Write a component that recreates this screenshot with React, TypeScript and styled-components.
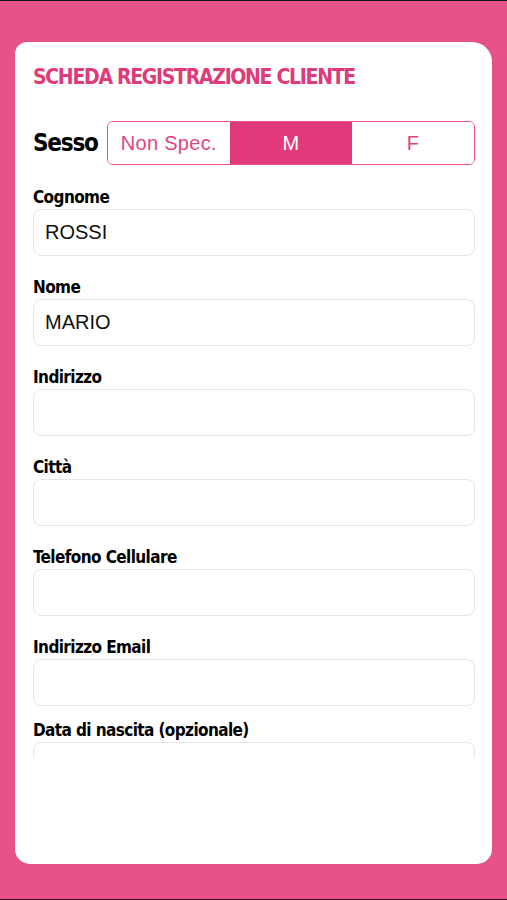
import React from "react";
import styled, { createGlobalStyle } from "styled-components";

const Global = createGlobalStyle`
  html, body { margin: 0; padding: 0; }
  body {
    background: #e8528a;
    font-family: "Liberation Sans", Arial, sans-serif;
  }
  * { box-sizing: border-box; }
`;

const condensed = `"DejaVu Sans Condensed", "Liberation Sans", sans-serif`;

const Page = styled.div`
  height: 900px;
  border-top: 1px solid #111;
  border-bottom: 1px solid #3a0d22;
  padding: 41px 15px 0 15px;
  background: #e8528a;
`;

const Card = styled.div`
  height: 822px;
  background: #fff;
  border-radius: 12px 20px 15px 15px;
  padding: 0 17px 0 18px;
  display: flex;
  flex-direction: column;
`;

const Title = styled.h1`
  margin: 22px 0 0 0;
  font-family: ${condensed};
  font-weight: 700;
  font-size: 21px;
  line-height: 26px;
  letter-spacing: -1.3px;
  color: #e03a78;
`;

const SexRow = styled.div`
  margin-top: 31px;
  display: flex;
  align-items: center;
  gap: 9px;
`;

const SexLabel = styled.span`
  font-family: ${condensed};
  font-weight: 700;
  font-size: 24px;
  letter-spacing: -1.2px;
  color: #000;
`;

const Segmented = styled.div`
  flex: 1;
  height: 44px;
  display: flex;
  border: 1.5px solid #e8528a;
  border-radius: 6px;
  overflow: hidden;
`;

const Segment = styled.div<{ $active?: boolean }>`
  flex: 1;
  display: flex;
  align-items: center;
  justify-content: center;
  font-family: "Liberation Sans", Arial, sans-serif;
  font-size: 20px;
  letter-spacing: 0.3px;
  color: ${(p) => (p.$active ? "#fff" : "#e0457f")};
  background: ${(p) => (p.$active ? "#e2397a" : "#fff")};
`;

const Scroll = styled.div`
  margin-top: 21px;
  height: 572px;
  overflow: hidden;
  display: flex;
  flex-direction: column;
`;

const Field = styled.div<{ $top: number }>`
  display: flex;
  flex-direction: column;
  gap: 1px;
  margin-top: ${(p) => p.$top}px;
`;

const Label = styled.label`
  font-family: ${condensed};
  font-weight: 700;
  font-size: 17px;
  line-height: 22px;
  letter-spacing: -0.6px;
  color: #000;
`;

const Input = styled.div`
  height: 47px;
  flex-shrink: 0;
  border: 1px solid #e6e6e6;
  border-radius: 8px;
  padding: 0 11px;
  display: flex;
  align-items: center;
  font-family: "Liberation Sans", Arial, sans-serif;
  font-size: 20px;
  color: #111;
`;

const fields: { label: string; value: string; top: number }[] = [
  { label: "Cognome", value: "ROSSI", top: 0 },
  { label: "Nome", value: "MARIO", top: 20 },
  { label: "Indirizzo", value: "", top: 20 },
  { label: "Città", value: "", top: 20 },
  { label: "Telefono Cellulare", value: "", top: 20 },
  { label: "Indirizzo Email", value: "", top: 20 },
  { label: "Data di nascita (opzionale)", value: "", top: 13 },
];

export default function App() {
  return (
    <>
      <Global />
      <Page>
        <Card>
          <Title>SCHEDA REGISTRAZIONE CLIENTE</Title>
          <SexRow>
            <SexLabel>Sesso</SexLabel>
            <Segmented>
              <Segment>Non Spec.</Segment>
              <Segment $active>M</Segment>
              <Segment>F</Segment>
            </Segmented>
          </SexRow>
          <Scroll>
            {fields.map((f) => (
              <Field key={f.label} $top={f.top}>
                <Label>{f.label}</Label>
                <Input>{f.value}</Input>
              </Field>
            ))}
          </Scroll>
        </Card>
      </Page>
    </>
  );
}
